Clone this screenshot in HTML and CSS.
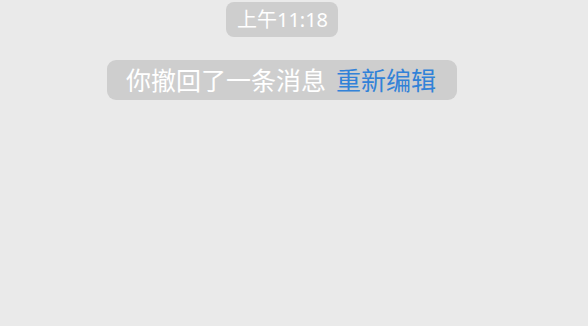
FILE: index.html
```html
<!DOCTYPE html>
<html lang="zh-CN">
<head>
<meta charset="utf-8">
<link rel="stylesheet" href="styles.css">
</head>
<body>
<div class="chat">
  <div class="time">上午11:18</div>
  <div class="notice"><span class="msg">你撤回了一条消息</span><span class="edit">重新编辑</span></div>
</div>
</body>
</html>
```
FILE: styles.css
```css
html, body {
  margin: 0;
  padding: 0;
  background: #eaeaea;
  width: 588px;
  height: 326px;
  overflow: hidden;
}
.chat {
  display: flex;
  flex-direction: column;
  align-items: center;
  padding-right: 24px;
  font-family: "Noto Sans", "Noto Sans CJK SC", sans-serif;
  font-weight: 400;
  color: #ffffff;
}
.time {
  margin-top: 2px;
  height: 35px;
  line-height: 35px;
  padding: 0 10px 0 11px;
  background: #cecece;
  border-radius: 8px;
  font-size: 20px;
}
.notice {
  margin-top: 23px;
  height: 40px;
  line-height: 40px;
  padding: 0 21px 0 19px;
  background: #cecece;
  border-radius: 9px;
  font-size: 25px;
  display: flex;
  gap: 10px;
}
.edit {
  color: #3282d8;
}
```
